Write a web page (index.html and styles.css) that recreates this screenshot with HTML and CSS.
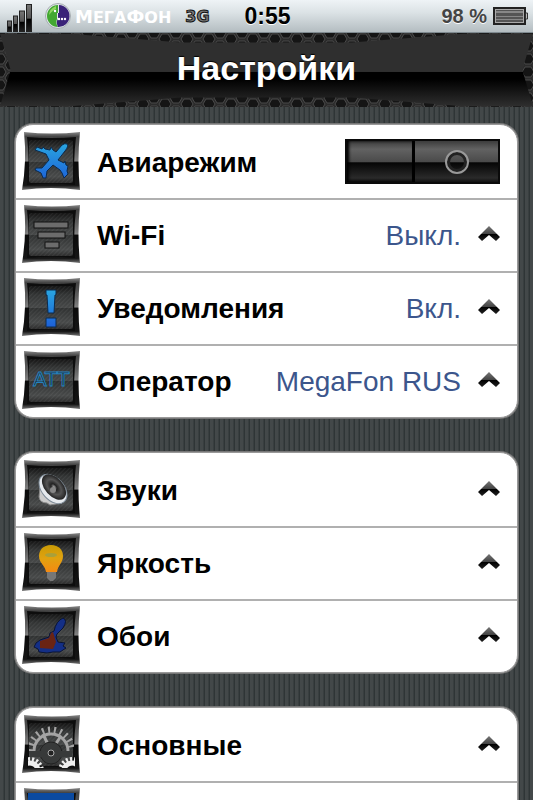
FILE: index.html
```
<!DOCTYPE html>
<html lang="ru">
<head>
    <meta charset="UTF-8">
    <meta name="viewport" content="width=device-width, initial-scale=1.0">
    <title>Настройки</title>
    <link rel="stylesheet" href="styles.css">
</head>
<body>
    <!-- shared shapes -->
    <svg class="defs" width="0" height="0" aria-hidden="true">
        <defs>
            <linearGradient id="frame" x1="0" y1="0" x2="0" y2="1">
                <stop offset="0" stop-color="#8a8a8a"/>
                <stop offset=".08" stop-color="#444"/>
                <stop offset=".3" stop-color="#5c5c5c"/>
                <stop offset=".5" stop-color="#808080"/>
                <stop offset=".52" stop-color="#0a0a0a"/>
                <stop offset=".92" stop-color="#161616"/>
                <stop offset="1" stop-color="#777"/>
            </linearGradient>
            <linearGradient id="face" x1="0" y1="0" x2="0" y2="1">
                <stop offset="0" stop-color="#151515"/>
                <stop offset=".2" stop-color="#333535"/>
                <stop offset=".5" stop-color="#464848"/>
                <stop offset=".52" stop-color="#303232"/>
                <stop offset=".85" stop-color="#484a4a"/>
                <stop offset="1" stop-color="#2c2c2c"/>
            </linearGradient>
            <linearGradient id="blue" gradientUnits="userSpaceOnUse" x1="0" y1="12" x2="0" y2="48">
                <stop offset="0" stop-color="#29a5e0"/>
                <stop offset="1" stop-color="#1d62d8"/>
            </linearGradient>
            <linearGradient id="bulb" x1="0" y1="0" x2="0" y2="1">
                <stop offset="0" stop-color="#c99a05"/>
                <stop offset=".5" stop-color="#e0a210"/>
                <stop offset="1" stop-color="#f58a12"/>
            </linearGradient>
            <linearGradient id="arrow" x1="0" y1="0" x2="0" y2="1">
                <stop offset="0" stop-color="#777"/>
                <stop offset=".5" stop-color="#444"/>
                <stop offset=".55" stop-color="#000"/>
                <stop offset="1" stop-color="#222"/>
            </linearGradient>
            <linearGradient id="bar" x1="0" y1="0" x2="0" y2="1">
                <stop offset="0" stop-color="#777"/>
                <stop offset=".5" stop-color="#555"/>
                <stop offset=".55" stop-color="#000"/>
                <stop offset="1" stop-color="#222"/>
            </linearGradient>
            <radialGradient id="cone">
                <stop offset="0" stop-color="#aaa"/>
                <stop offset=".25" stop-color="#222"/>
                <stop offset=".6" stop-color="#555"/>
                <stop offset="1" stop-color="#222"/>
            </radialGradient>
            <pattern id="hatch" width="3" height="3" patternUnits="userSpaceOnUse" patternTransform="rotate(45)">
                <rect width="1" height="3" fill="#fff" opacity=".06"/>
            </pattern>
            <clipPath id="upper"><path d="M7 7H52V36H7Z"/></clipPath>
            <clipPath id="inside"><path d="M6 7H53V53H6Z"/></clipPath>
            <symbol id="tile" viewBox="0 0 58 58">
                <path fill="url(#frame)" d="M2 0Q30 3 58 0Q55 29 58 58Q29 54 0 58Q5 29 2 0Z"/>
                <path fill="#0d0d0d" d="M5 5Q30 7 54 5Q51 29 53 53Q29 50 5 53Q8 29 5 5Z"/>
                <rect x="7" y="8" width="44" height="43" rx="2" fill="url(#face)"/>
                <rect x="7" y="8" width="44" height="43" rx="2" fill="url(#hatch)"/>
            </symbol>
            <symbol id="chevron" viewBox="0 0 22 16">
                <path fill="url(#arrow)" d="M11 0L22 11L18 15L11 9L4 15L0 11Z"/>
            </symbol>
            <pattern id="hex" width="22" height="13" patternUnits="userSpaceOnUse">
                <rect width="22" height="13" fill="#2b2b2b"/>
                <g fill="#151515" stroke="#484848">
                    <path d="M5 6L8 1H14L17 6L14 11H8Z"/>
                    <path d="M-6 0L-3 -5H3L6 0L3 5H-3Z"/>
                    <path d="M16 0L19 -5H25L28 0L25 5H19Z"/>
                    <path d="M-6 13L-3 8H3L6 13L3 18H-3Z"/>
                    <path d="M16 13L19 8H25L28 13L25 18H19Z"/>
                </g>
            </pattern>
        </defs>
    </svg>

    <div class="status">
        <div class="status-side">
            <svg class="signal" viewBox="0 0 26 28" aria-hidden="true">
                <g fill="url(#bar)" stroke="#222">
                    <rect x=".5" y="17" width="4" height="10.500"/>
                    <rect x="6.500" y="12" width="4" height="15.500"/>
                    <rect x="12.500" y="7" width="5" height="20.500"/>
                    <rect x="19.500" y=".5" width="5" height="27"/>
                </g>
            </svg>
            <svg class="logo" viewBox="0 0 26 26" aria-hidden="true">
                <circle cx="13" cy="13" r="12.500" fill="#dfe5e8" stroke="#a5adb0"/>
                <path fill="#43a832" d="M13 2A11 11 0 0 0 13 24C11 21 11 19 12 16V10H13Z"/>
                <path fill="#3a2378" d="M14 2A11 11 0 0 1 13 24C12 21 11 19 13 16V10H14Z"/>
                <path fill="#90d860" d="M11 3Q4 6 4 12Q8 7 11 6Z"/>
                <g fill="#fff"><circle cx="10" cy="8" r="1.200"/><circle cx="14" cy="16" r="1.200"/><circle cx="17" cy="16" r="1.200"/><circle cx="20" cy="16" r="1.200"/></g>
            </svg>
            <span class="carrier">М<small>ЕГА</small>Ф<small>ОН</small></span>
            <span class="network">3G</span>
        </div>
        <time class="clock">0:55</time>
        <div class="status-side status-right">
            <span class="percent">98 %</span>
            <svg class="battery" viewBox="0 0 35 18" aria-hidden="true">
                <rect x="1" y="1" width="31" height="16" fill="#aaa" stroke="#222" stroke-width="2"/>
                <rect x="3" y="3" width="27" height="12" fill="#555"/>
                <path fill="#888" d="M3 4H30V6H3ZM3 9H30V10H3ZM3 12H30V13H3Z"/>
                <path fill="#bbb" stroke="#333" d="M32.500 6H34.500V12H32.500Z"/>
            </svg>
        </div>
    </div>

    <header class="header">
        <svg class="mesh" width="100%" height="100%" aria-hidden="true"><rect width="100%" height="100%" fill="url(#hex)"/></svg>
        <div class="plate"><h1>Настройки</h1></div>
    </header>

    <main class="content">
        <div class="group">
            <div class="row">
                <svg class="icon" viewBox="0 0 58 58" aria-hidden="true">
                    <use href="#tile"/>
                    <path fill="url(#blue)" stroke="#0c2a4c" d="M45 12Q47 14 43 19L36 28L42 31L43 29L44 33L46 34L45 39L46 42L42 46L40 41L38 38L31 33L25 39L24 46L21 46L19 41L13 38L14 36L20 36L27 28L24 22L13 18L15 15L20 17L21 15L23 17L28 18L29 15L31 18L34 20L40 13Q43 11 45 12Z"/>
                </svg>
                <label class="name" for="air">Авиарежим</label>
                <input class="switch" type="checkbox" id="air">
            </div>
            <a class="row" href="#wifi">
                <svg class="icon" viewBox="0 0 58 58" aria-hidden="true">
                    <use href="#tile"/>
                    <g fill="#6c6c6c" stroke="#111">
                        <rect x="12" y="17" width="34" height="6"/>
                        <rect x="16" y="27" width="27" height="6"/>
                        <rect x="23" y="37" width="14" height="6"/>
                    </g>
                </svg>
                <span class="name">Wi-Fi</span>
                <span class="value">Выкл.</span>
                <svg class="chevron" aria-hidden="true"><use href="#chevron"/></svg>
            </a>
            <a class="row" href="#notifications">
                <svg class="icon" viewBox="0 0 58 58" aria-hidden="true">
                    <use href="#tile"/>
                    <path fill="url(#blue)" stroke="#0c2a4c" d="M24 12H34V17H33L32 35H26L25 17H24ZM24 40H34V49H24Z"/>
                </svg>
                <span class="name">Уведомления</span>
                <span class="value">Вкл.</span>
                <svg class="chevron" aria-hidden="true"><use href="#chevron"/></svg>
            </a>
            <a class="row" href="#carrier">
                <svg class="icon" viewBox="0 0 58 58" aria-hidden="true">
                    <use href="#tile"/>
                    <text class="att" x="29" y="35" text-anchor="middle">ATT</text>
                </svg>
                <span class="name">Оператор</span>
                <span class="value">MegaFon RUS</span>
                <svg class="chevron" aria-hidden="true"><use href="#chevron"/></svg>
            </a>
        </div>

        <div class="group">
            <a class="row" href="#sounds">
                <svg class="icon" viewBox="0 0 58 58" aria-hidden="true">
                    <use href="#tile"/>
                    <path fill="#ccc" stroke="#888" d="M18 27L17 37Q18 43 25 43L28 45L40 43Z"/>
                    <ellipse cx="31" cy="29" rx="17" ry="11" transform="rotate(48 31 29)" fill="#e6eaee" stroke="#7d8b98"/>
                    <ellipse cx="32" cy="27" rx="15" ry="9" transform="rotate(48 32 27)" fill="url(#cone)"/>
                    <circle cx="31" cy="30" r="3" fill="#888"/>
                </svg>
                <span class="name">Звуки</span>
                <svg class="chevron" aria-hidden="true"><use href="#chevron"/></svg>
            </a>
            <a class="row" href="#brightness">
                <svg class="icon" viewBox="0 0 58 58" aria-hidden="true">
                    <use href="#tile"/>
                    <path fill="url(#bulb)" d="M29 12C37 12 41 17 41 23C41 30 36 32 35 39H24C23 32 17 30 17 23C17 17 21 12 29 12Z"/>
                    <path fill="#777" d="M25 39H34V45L31 48H28L25 45Z"/>
                    <ellipse cx="29" cy="22" rx="6" ry="2" fill="#a8a03c"/>
                </svg>
                <span class="name">Яркость</span>
                <svg class="chevron" aria-hidden="true"><use href="#chevron"/></svg>
            </a>
            <a class="row" href="#wallpaper">
                <svg class="icon" viewBox="0 0 58 58" aria-hidden="true">
                    <use href="#tile"/>
                    <path fill="#142f86" stroke="#0a1433" d="M41 12Q46 14 41 22L35 28L34 31L36 36L43 37L41 40L44 42L38 46H31L25 47L17 46L16 43L12 41L14 37L18 34L27 31L28 27L32 25Q34 15 41 12Z"/>
                    <path fill="#6a2413" d="M29 27L31 26L34 36L31 43L18 42L18 35L27 32Z"/>
                </svg>
                <span class="name">Обои</span>
                <svg class="chevron" aria-hidden="true"><use href="#chevron"/></svg>
            </a>
        </div>

        <div class="group">
            <a class="row" href="#general">
                <svg class="icon" viewBox="0 0 58 58" aria-hidden="true">
                    <use href="#tile"/>
                    <g clip-path="url(#upper)" fill="none" stroke="#a4a4a4">
                        <circle cx="29" cy="36" r="21" stroke-width="7" stroke-dasharray="2 4" pathLength="132"/>
                        <circle cx="29" cy="36" r="17" stroke-width="3"/>
                        <path stroke-width="3" d="M29 36L21 19M29 36L39 21"/>
                    </g>
                    <circle cx="29" cy="38" r="11" fill="#383a3a" stroke="#222"/>
                    <path stroke="#383a3a" stroke-width="6" d="M8 39H50"/>
                    <circle cx="29" cy="38" r="3" fill="#222" stroke="#aaa"/>
                    <g clip-path="url(#inside)" fill="none" stroke="#eee">
                        <circle cx="8" cy="56" r="11" stroke-width="6" stroke-dasharray="2 2" pathLength="72"/>
                        <circle cx="8" cy="56" r="8" stroke-width="5"/>
                        <circle cx="50" cy="56" r="11" stroke-width="6" stroke-dasharray="2 2" pathLength="72"/>
                        <circle cx="50" cy="56" r="8" stroke-width="5"/>
                    </g>
                </svg>
                <span class="name">Основные</span>
                <svg class="chevron" aria-hidden="true"><use href="#chevron"/></svg>
            </a>
            <div class="row">
                <svg class="icon" viewBox="0 0 58 58" aria-hidden="true">
                    <use href="#tile"/>
                    <rect x="6" y="5" width="46" height="47" fill="#0b4aa0"/>
                </svg>
            </div>
        </div>
    </main>
</body>
</html>
```
FILE: styles.css
```
* {
    box-sizing: border-box;
}
body {
    margin: 0;
    height: 100vh;
    overflow: hidden;
    font-family: "Liberation Sans", Arial, sans-serif;
    background: repeating-linear-gradient(90deg, #434849 0, #434849 3px, #2f3536 4px, #2f3536 5px);
}
.defs {
    position: absolute;
}

/* status bar */
.status {
    display: flex;
    align-items: center;
    height: 33px;
    padding: 0 5px 0 7px;
    background: linear-gradient(#eef3f6, #dbe2e5 40%, #b4bdc1);
    border-bottom: 1px solid #7f8a90;
}
.status-side {
    display: flex;
    flex: 1;
    align-items: center;
}
.status-right {
    justify-content: flex-end;
    gap: 6px;
}
.signal {
    width: 26px;
    height: 28px;
    margin-top: 4px;
}
.logo {
    width: 26px;
    height: 26px;
    margin: 0 4px 0 12px;
}
.carrier {
    color: #fff;
    font: bold 18px "DejaVu Sans", sans-serif;
}
.carrier small {
    font-size: 16px;
}
.network {
    margin-left: 14px;
    color: #777;
    font: bold 16px "DejaVu Sans", sans-serif;
    -webkit-text-stroke: 1px #111;
}
.clock {
    font-size: 23px;
    font-weight: bold;
    text-shadow: 0 1px 0 #fff;
}
.percent {
    color: #444;
    font-size: 20px;
    font-weight: bold;
    text-shadow: 0 1px 0 #fff;
}
.battery {
    width: 35px;
    height: 18px;
}

/* title */
.header {
    display: grid;
    height: 74px;
}
.mesh,
.plate {
    grid-area: 1 / 1;
}
.plate {
    display: flex;
    align-items: center;
    justify-content: center;
    background: linear-gradient(#2f2f2f, #2f2f2f 52%, #000 53%, #000 62%, #303030);
    clip-path: polygon(0 1%, 13% 1%, 34% 13%, 66% 13%, 87% 1%, 100% 1%, 98% 50%, 100% 99%, 87% 99%, 66% 87%, 34% 87%, 13% 99%, 0 99%, 2% 50%);
}
h1 {
    margin: 0 0 4px;
    color: #fff;
    font-size: 34px;
    line-height: 40px;
    text-shadow: 0 -1px 1px #000;
}

/* lists */
.content {
    display: flex;
    flex-direction: column;
    gap: 34px;
    padding: 17px 15px;
}
.group {
    background: #fff;
    border: 1px solid #999;
    border-radius: 18px;
    box-shadow: 0 0 0 1px #777;
}
.row {
    display: flex;
    align-items: center;
    height: 73px;
    padding: 0 17px 0 6px;
    color: #000;
    text-decoration: none;
    box-shadow: 0 1px 0 1px #b0b0b0;
    clip-path: inset(0 0 -2px);
}
.row:last-child {
    box-shadow: none;
}
.icon {
    width: 58px;
    height: 58px;
    margin: 0 17px 2px 0;
}
.name {
    flex: 1;
    padding-top: 2px;
    font-size: 28px;
    font-weight: bold;
}
.value {
    margin-right: 17px;
    padding-top: 2px;
    color: #3c568c;
    font-size: 28px;
}
.chevron {
    width: 22px;
    height: 16px;
    margin-bottom: 2px;
}
.att {
    fill: #1c2226;
    stroke: #2682bd;
    stroke-width: 1px;
    font: 20px "DejaVu Sans", sans-serif;
}
.switch {
    appearance: none;
    display: flex;
    width: 155px;
    height: 45px;
    margin: 0;
    background: linear-gradient(#3c3c3c, #626262 20%, #4a4a4a 51%, #050505 53%, #2a2a2a 90%, #111);
    border: 2px solid #0a0a0a;
}
.switch::before {
    content: "";
    flex: none;
    width: 65px;
    box-shadow: inset 2px 0 3px #000;
    border-right: 3px solid #000;
}
.switch::after {
    content: "";
    flex: none;
    width: 20px;
    height: 20px;
    margin: 9px 0 0 30px;
    border: 2px solid #999;
    border-radius: 50%;
    box-shadow: inset 0 0 0 3px #222;
}
```
